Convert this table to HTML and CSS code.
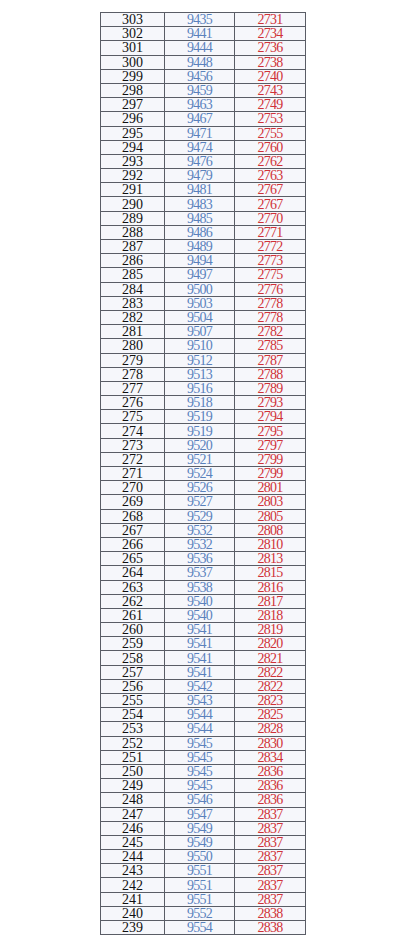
FILE: index.html
```html
<!DOCTYPE html>
<html>
<head>
<meta charset="utf-8">
<link rel="stylesheet" href="styles.css">
</head>
<body>
<div class="page">
<table class="scores">
<tbody>
<tr><td class="c1">303</td><td class="c2">9435</td><td class="c3">2731</td></tr>
<tr><td class="c1">302</td><td class="c2">9441</td><td class="c3">2734</td></tr>
<tr><td class="c1">301</td><td class="c2">9444</td><td class="c3">2736</td></tr>
<tr><td class="c1">300</td><td class="c2">9448</td><td class="c3">2738</td></tr>
<tr><td class="c1">299</td><td class="c2">9456</td><td class="c3">2740</td></tr>
<tr><td class="c1">298</td><td class="c2">9459</td><td class="c3">2743</td></tr>
<tr><td class="c1">297</td><td class="c2">9463</td><td class="c3">2749</td></tr>
<tr><td class="c1">296</td><td class="c2">9467</td><td class="c3">2753</td></tr>
<tr><td class="c1">295</td><td class="c2">9471</td><td class="c3">2755</td></tr>
<tr><td class="c1">294</td><td class="c2">9474</td><td class="c3">2760</td></tr>
<tr><td class="c1">293</td><td class="c2">9476</td><td class="c3">2762</td></tr>
<tr><td class="c1">292</td><td class="c2">9479</td><td class="c3">2763</td></tr>
<tr><td class="c1">291</td><td class="c2">9481</td><td class="c3">2767</td></tr>
<tr><td class="c1">290</td><td class="c2">9483</td><td class="c3">2767</td></tr>
<tr><td class="c1">289</td><td class="c2">9485</td><td class="c3">2770</td></tr>
<tr><td class="c1">288</td><td class="c2">9486</td><td class="c3">2771</td></tr>
<tr><td class="c1">287</td><td class="c2">9489</td><td class="c3">2772</td></tr>
<tr><td class="c1">286</td><td class="c2">9494</td><td class="c3">2773</td></tr>
<tr><td class="c1">285</td><td class="c2">9497</td><td class="c3">2775</td></tr>
<tr><td class="c1">284</td><td class="c2">9500</td><td class="c3">2776</td></tr>
<tr><td class="c1">283</td><td class="c2">9503</td><td class="c3">2778</td></tr>
<tr><td class="c1">282</td><td class="c2">9504</td><td class="c3">2778</td></tr>
<tr><td class="c1">281</td><td class="c2">9507</td><td class="c3">2782</td></tr>
<tr><td class="c1">280</td><td class="c2">9510</td><td class="c3">2785</td></tr>
<tr><td class="c1">279</td><td class="c2">9512</td><td class="c3">2787</td></tr>
<tr><td class="c1">278</td><td class="c2">9513</td><td class="c3">2788</td></tr>
<tr><td class="c1">277</td><td class="c2">9516</td><td class="c3">2789</td></tr>
<tr><td class="c1">276</td><td class="c2">9518</td><td class="c3">2793</td></tr>
<tr><td class="c1">275</td><td class="c2">9519</td><td class="c3">2794</td></tr>
<tr><td class="c1">274</td><td class="c2">9519</td><td class="c3">2795</td></tr>
<tr><td class="c1">273</td><td class="c2">9520</td><td class="c3">2797</td></tr>
<tr><td class="c1">272</td><td class="c2">9521</td><td class="c3">2799</td></tr>
<tr><td class="c1">271</td><td class="c2">9524</td><td class="c3">2799</td></tr>
<tr><td class="c1">270</td><td class="c2">9526</td><td class="c3">2801</td></tr>
<tr><td class="c1">269</td><td class="c2">9527</td><td class="c3">2803</td></tr>
<tr><td class="c1">268</td><td class="c2">9529</td><td class="c3">2805</td></tr>
<tr><td class="c1">267</td><td class="c2">9532</td><td class="c3">2808</td></tr>
<tr><td class="c1">266</td><td class="c2">9532</td><td class="c3">2810</td></tr>
<tr><td class="c1">265</td><td class="c2">9536</td><td class="c3">2813</td></tr>
<tr><td class="c1">264</td><td class="c2">9537</td><td class="c3">2815</td></tr>
<tr><td class="c1">263</td><td class="c2">9538</td><td class="c3">2816</td></tr>
<tr><td class="c1">262</td><td class="c2">9540</td><td class="c3">2817</td></tr>
<tr><td class="c1">261</td><td class="c2">9540</td><td class="c3">2818</td></tr>
<tr><td class="c1">260</td><td class="c2">9541</td><td class="c3">2819</td></tr>
<tr><td class="c1">259</td><td class="c2">9541</td><td class="c3">2820</td></tr>
<tr><td class="c1">258</td><td class="c2">9541</td><td class="c3">2821</td></tr>
<tr><td class="c1">257</td><td class="c2">9541</td><td class="c3">2822</td></tr>
<tr><td class="c1">256</td><td class="c2">9542</td><td class="c3">2822</td></tr>
<tr><td class="c1">255</td><td class="c2">9543</td><td class="c3">2823</td></tr>
<tr><td class="c1">254</td><td class="c2">9544</td><td class="c3">2825</td></tr>
<tr><td class="c1">253</td><td class="c2">9544</td><td class="c3">2828</td></tr>
<tr><td class="c1">252</td><td class="c2">9545</td><td class="c3">2830</td></tr>
<tr><td class="c1">251</td><td class="c2">9545</td><td class="c3">2834</td></tr>
<tr><td class="c1">250</td><td class="c2">9545</td><td class="c3">2836</td></tr>
<tr><td class="c1">249</td><td class="c2">9545</td><td class="c3">2836</td></tr>
<tr><td class="c1">248</td><td class="c2">9546</td><td class="c3">2836</td></tr>
<tr><td class="c1">247</td><td class="c2">9547</td><td class="c3">2837</td></tr>
<tr><td class="c1">246</td><td class="c2">9549</td><td class="c3">2837</td></tr>
<tr><td class="c1">245</td><td class="c2">9549</td><td class="c3">2837</td></tr>
<tr><td class="c1">244</td><td class="c2">9550</td><td class="c3">2837</td></tr>
<tr><td class="c1">243</td><td class="c2">9551</td><td class="c3">2837</td></tr>
<tr><td class="c1">242</td><td class="c2">9551</td><td class="c3">2837</td></tr>
<tr><td class="c1">241</td><td class="c2">9551</td><td class="c3">2837</td></tr>
<tr><td class="c1">240</td><td class="c2">9552</td><td class="c3">2838</td></tr>
<tr><td class="c1">239</td><td class="c2">9554</td><td class="c3">2838</td></tr>
</tbody>
</table>
</div>
</body>
</html>
```

FILE: styles.css
```css
html, body {
  margin: 0;
  padding: 0;
  background: #ffffff;
}

.page {
  padding: 12px 0 0 100px;
}

.scores {
  border-collapse: collapse;
  table-layout: fixed;
  width: 205px;
  font-family: "Liberation Serif", "Times New Roman", serif;
  font-size: 14px;
  background: #f6f7fb;
}

.scores td {
  border: 1px solid #5a5d66;
  height: 13.2px;
  padding: 0;
  line-height: 13px;
  text-align: center;
  vertical-align: middle;
  overflow: hidden;
}

.scores .c1 {
  width: 63px;
  color: #111111;
}

.scores .c2 {
  width: 69px;
  color: #5a82bd;
  letter-spacing: -0.8px;
}

.scores .c3 {
  width: 70px;
  color: #d03238;
  letter-spacing: -0.8px;
}
```
